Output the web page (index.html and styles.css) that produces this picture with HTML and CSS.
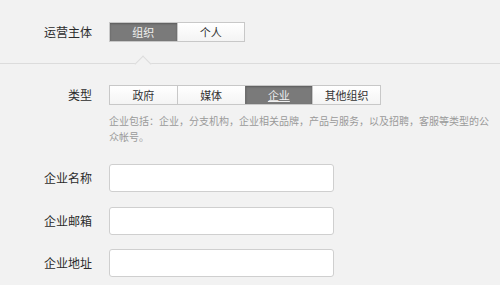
FILE: index.html
```html
<!doctype html>
<html lang="zh-CN">
  <head>
    <meta charset="UTF-8" />
    <meta name="viewport" content="width=device-width, initial-scale=1.0" />
    <title>注册 - 信息登记</title>
    <link rel="stylesheet" href="styles.css">
  </head>
  <body>
    <div class="page">
      <div class="section section-top">
        <div class="row">
          <label class="row-label">运营主体</label>
          <div class="seg seg-2">
            <span class="seg-btn active">组织</span>
            <span class="seg-btn">个人</span>
          </div>
        </div>
      </div>

      <div class="divider"></div>

      <div class="section section-form">
        <div class="row">
          <label class="row-label">类型</label>
          <div class="seg seg-4">
            <span class="seg-btn">政府</span>
            <span class="seg-btn">媒体</span>
            <span class="seg-btn active hover">企业</span>
            <span class="seg-btn">其他组织</span>
          </div>
        </div>
        <p class="tips">企业包括：企业，分支机构，企业相关品牌，产品与服务，以及招聘，客服等类型的公众帐号。</p>

        <div class="fields">
          <div class="row field">
            <label class="row-label" for="name">企业名称</label>
            <input type="text" id="name" class="input" />
          </div>
          <div class="row field">
            <label class="row-label" for="email">企业邮箱</label>
            <input type="text" id="email" class="input" />
          </div>
          <div class="row field">
            <label class="row-label" for="addr">企业地址</label>
            <input type="text" id="addr" class="input" />
          </div>
        </div>
      </div>
    </div>
  </body>
</html>
```

FILE: styles.css
```css
* {
  margin: 0;
  padding: 0;
  box-sizing: border-box;
}

body {
  font-family: "Noto Sans CJK SC", "Noto Sans", sans-serif;
  background: #f2f2f2;
  color: #333;
  overflow: hidden;
}

.page {
  width: 500px;
}

.section-top {
  padding: 22px 0 21px;
}

.section-form {
  padding: 21px 0 0;
}

.row {
  display: flex;
  align-items: center;
  gap: 17px;
}

.row-label {
  width: 92px;
  text-align: right;
  font-size: 12px;
  line-height: 20px;
  color: #2b2b2b;
}

.seg {
  display: flex;
  height: 20px;
  border: 1px solid #c8c8c8;
  background: #fff;
}

.seg-2 {
  width: 136px;
}

.seg-4 {
  width: 272px;
}

.seg-btn {
  flex: 1;
  text-align: center;
  font-size: 11px;
  line-height: 18px;
  color: #333;
  background: linear-gradient(#fff, #f4f4f4);
  border-left: 1px solid #c8c8c8;
  cursor: pointer;
}

.seg-btn:first-child {
  border-left: none;
}

.seg-btn.active {
  background: #7a7a7a;
  color: #f0f0f0;
  box-shadow: inset 0 1px 2px rgba(0, 0, 0, 0.25);
  border-left-color: #6e6e6e;
}

.seg-btn.hover {
  text-decoration: underline;
}

.divider {
  position: relative;
  height: 1px;
  background: #dcdcdc;
}

.divider::before {
  content: "";
  position: absolute;
  left: 137px;
  top: -5px;
  width: 11px;
  height: 11px;
  background: #f2f2f2;
  border-top: 1px solid #dcdcdc;
  border-left: 1px solid #dcdcdc;
  transform: rotate(45deg);
}

.tips {
  width: 385px;
  margin: 8px 0 0 109px;
  font-size: 10px;
  line-height: 16px;
  color: #9a9a9a;
  text-spacing-trim: space-all;
}

.fields {
  margin-top: 19px;
  display: flex;
  flex-direction: column;
  gap: 14.5px;
}

.input {
  width: 225px;
  height: 28px;
  border: 1px solid #cfcfcf;
  border-radius: 3px;
  background: #fff;
  outline: none;
  font-size: 12px;
  padding: 0 6px;
}
```
